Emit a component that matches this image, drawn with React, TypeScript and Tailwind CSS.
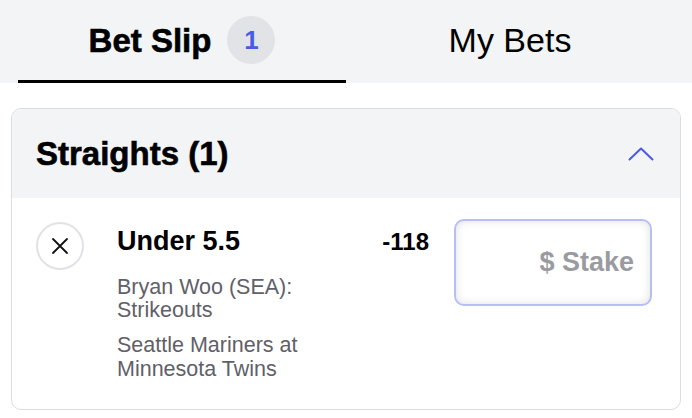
import React from 'react';

const ChevronUp: React.FC = () => (
  <svg width="26" height="14" viewBox="0 0 26 14" fill="none">
    <path d="M1.5 12.5L13 1.5L24.5 12.5" stroke="#4a5ae8" strokeWidth="2" strokeLinecap="round" strokeLinejoin="round" />
  </svg>
);

const CloseIcon: React.FC = () => (
  <svg width="18" height="18" viewBox="0 0 18 18" fill="none">
    <path d="M2 2L16 16M16 2L2 16" stroke="#111" strokeWidth="1.8" strokeLinecap="round" />
  </svg>
);

const App: React.FC = () => {
  return (
    <div className="w-[692px] h-[418px] bg-white overflow-hidden font-['Liberation_Sans',Arial,sans-serif]">
      {/* Tabs */}
      <div className="flex h-[83px] bg-[#f3f4f6] px-[18px]">
        <div className="flex-1 flex items-center justify-center gap-[16px] border-b-[3px] border-black">
          <span className="text-[33px] font-bold text-black leading-none [-webkit-text-stroke:0.6px_black]">Bet Slip</span>
          <span className="w-[48px] h-[48px] rounded-full bg-[#e2e3e7] flex items-center justify-center text-[26px] font-bold text-[#4a5ae8] leading-none">
            1
          </span>
        </div>
        <div className="flex-1 flex items-center justify-center border-b-[3px] border-transparent">
          <span className="text-[34px] text-black leading-none">My Bets</span>
        </div>
      </div>

      {/* Straights card */}
      <div className="mx-[11px] mt-[25px] border-[1.5px] border-[#dcdde2] rounded-[10px] overflow-hidden">
        <div className="h-[89px] bg-[#f3f4f6] flex items-center justify-between pl-[24px] pr-[26px]">
          <h2 className="text-[33px] font-bold text-black leading-none [-webkit-text-stroke:0.6px_black]">Straights (1)</h2>
          <ChevronUp />
        </div>

        <div className="flex items-start pt-[24px] pb-[28px] pl-[24px] pr-[28px]">
          <button className="w-[48px] h-[48px] shrink-0 rounded-full border-2 border-[#e1e2e6] flex items-center justify-center">
            <CloseIcon />
          </button>

          <div className="ml-[33px] flex-1 pt-[4px]">
            <p className="text-[27px] font-bold text-black leading-[30px]">Under 5.5</p>
            <p className="mt-[20px] text-[21.5px] text-[#5f6068] leading-[23px]">
              Bryan Woo (SEA):
              <br />
              Strikeouts
            </p>
            <p className="mt-[11px] text-[21.5px] text-[#5f6068] leading-[24px]">
              Seattle Mariners at
              <br />
              Minnesota Twins
            </p>
          </div>

          <span className="pt-[6px] text-[24px] font-bold text-black leading-[28px]">-118</span>

          <div className="ml-[25px] w-[198px] h-[87px] -mt-[3px] rounded-[10px] border-2 border-[#b7bdf7] bg-white shadow-[inset_0_0_8px_rgba(0,0,0,0.13)] flex items-center justify-end pr-[16px]">
            <span className="text-[27px] font-bold text-[#9a9ba1] leading-none">$ Stake</span>
          </div>
        </div>
      </div>
    </div>
  );
};

export default App;
